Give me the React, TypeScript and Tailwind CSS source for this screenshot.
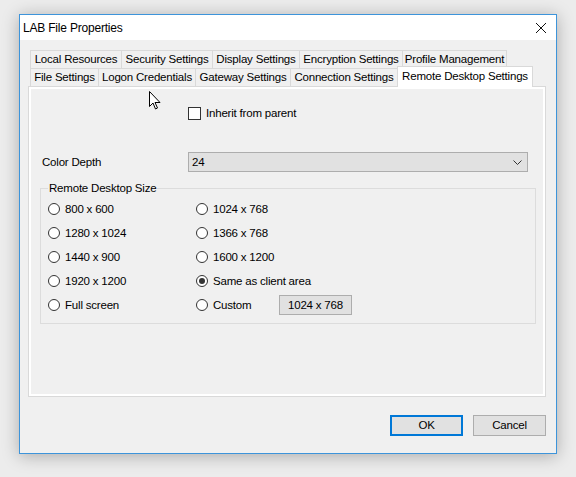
import React from "react";

const row1 = [
  { label: "Local Resources", w: "w-[91px]" },
  { label: "Security Settings", w: "w-[91px]" },
  { label: "Display Settings", w: "w-[87px]" },
  { label: "Encryption Settings", w: "w-[103px]" },
  { label: "Profile Management", w: "w-[105px] border-r" },
];

const row2 = [
  { label: "File Settings", w: "w-[68px]" },
  { label: "Logon Credentials", w: "w-[97px]" },
  { label: "Gateway Settings", w: "w-[95px]" },
  { label: "Connection Settings", w: "w-[107px]" },
];

const sizes: [string, string][] = [
  ["800 x 600", "1024 x 768"],
  ["1280 x 1024", "1366 x 768"],
  ["1440 x 900", "1600 x 1200"],
  ["1920 x 1200", "Same as client area"],
];

const Radio = ({ checked = false }: { checked?: boolean }) => (
  <span className="w-[12px] h-[12px] rounded-full border border-[#333333] bg-white flex items-center justify-center shrink-0">
    {checked && <span className="w-[6px] h-[6px] rounded-full bg-[#333333]" />}
  </span>
);

const Option = ({ label, checked }: { label: string; checked?: boolean }) => (
  <div className="flex items-center h-[24px]">
    <Radio checked={checked} />
    <span className="ml-[5px] pt-[1px]">{label}</span>
  </div>
);

export default function App() {
  return (
    <div className="relative w-[576px] h-[477px] bg-[#ececec] pl-[19px] pt-[14px] font-['Liberation_Sans',Arial,sans-serif] text-[11.5px] tracking-[-0.2px] text-black">
      <div className="w-[538px] h-[440px] border border-[#3d94da] bg-[#f0f0f0] shadow-[0_2px_16px_rgba(0,0,0,0.28)] flex flex-col">
        {/* title bar */}
        <div className="h-[25px] bg-white flex items-center justify-between pl-[3px] pr-[10px]">
          <span className="text-[12px]">LAB File Properties</span>
          <svg width="10" height="10" viewBox="0 0 10 10">
            <path d="M0 0 L10 10 M10 0 L0 10" stroke="#111" strokeWidth="1" />
          </svg>
        </div>

        <div className="flex-1 pt-[10px] pl-[8px]">
          {/* tabs */}
          <div className="pl-[2px]">
            <div className="flex h-[18px]">
              {row1.map((t) => (
                <div key={t.label} className={`${t.w} h-full border-t border-l border-[#d9d9d9] flex items-center justify-center pt-[1px]`}>
                  {t.label}
                </div>
              ))}
            </div>
            <div className="flex items-end h-[18px]">
              {row2.map((t) => (
                <div key={t.label} className={`${t.w} h-full border-t border-l border-[#d9d9d9] flex items-center justify-center pt-[1px]`}>
                  {t.label}
                </div>
              ))}
              <div className="relative z-10 w-[136px] h-[21px] -mb-px border-t border-l border-r border-[#d9d9d9] bg-white flex items-center justify-center pb-[1px]">
                Remote Desktop Settings
              </div>
            </div>
          </div>

          {/* tab page */}
          <div className="w-[518px] h-[311px] border border-[#d9d9d9] bg-white p-[2px]">
            <div className="h-full bg-[#f0f0f0] flex flex-col">
              <div className="mt-[18px] ml-[157px] flex items-center h-[13px]">
                <span className="w-[13px] h-[13px] border border-[#333333] bg-white" />
                <span className="ml-[5px]">Inherit from parent</span>
              </div>

              <div className="mt-[32px] flex items-center h-[20px]">
                <span className="w-[157px] pl-[11px] pt-[2px]">Color Depth</span>
                <div className="w-[340px] h-[20px] border border-[#adadad] bg-[#e1e1e1] flex items-center justify-between pl-[3px] pr-[5px]">
                  <span className="pt-[2px]">24</span>
                  <svg width="9" height="5" viewBox="0 0 9 5">
                    <path d="M0.5 0.5 L4.5 4.5 L8.5 0.5" fill="none" stroke="#333" strokeWidth="1" />
                  </svg>
                </div>
              </div>

              <fieldset className="mt-[9px] ml-[9px] w-[496px] border border-[#dcdcdc] pl-[7px] pb-[6px]">
                <legend className="px-[1px] leading-[14px]">Remote Desktop Size</legend>
                <div className="mt-[2px] grid grid-cols-[148px_1fr]">
                  {sizes.map(([a, b]) => (
                    <React.Fragment key={a}>
                      <Option label={a} />
                      <Option label={b} checked={b === "Same as client area"} />
                    </React.Fragment>
                  ))}
                  <Option label="Full screen" />
                  <div className="flex items-center h-[24px]">
                    <Radio />
                    <span className="ml-[5px] w-[66px] pt-[1px]">Custom</span>
                    <span className="w-[73px] h-[20px] border border-[#adadad] bg-[#e1e1e1] flex items-center justify-center pt-[1px]">
                      1024 x 768
                    </span>
                  </div>
                </div>
              </fieldset>
            </div>
          </div>

          {/* dialog buttons */}
          <div className="w-[518px] mt-[18px] flex justify-end gap-[10px]">
            <button className="w-[73px] h-[21px] border-2 border-[#0078d7] bg-[#e1e1e1] flex items-center justify-center">
              OK
            </button>
            <button className="w-[73px] h-[21px] border border-[#adadad] bg-[#e1e1e1] flex items-center justify-center">
              Cancel
            </button>
          </div>
        </div>
      </div>

      {/* mouse pointer */}
      <svg className="absolute left-[149px] top-[91px]" width="13" height="20" viewBox="0 0 13 20">
        <path d="M0.5 0.5 L0.5 15.5 L4 12 L6.5 18 L8.5 17 L6 11.5 L11 11.5 Z" fill="#fff" stroke="#000" strokeWidth="1" strokeLinejoin="miter" />
      </svg>
    </div>
  );
}
